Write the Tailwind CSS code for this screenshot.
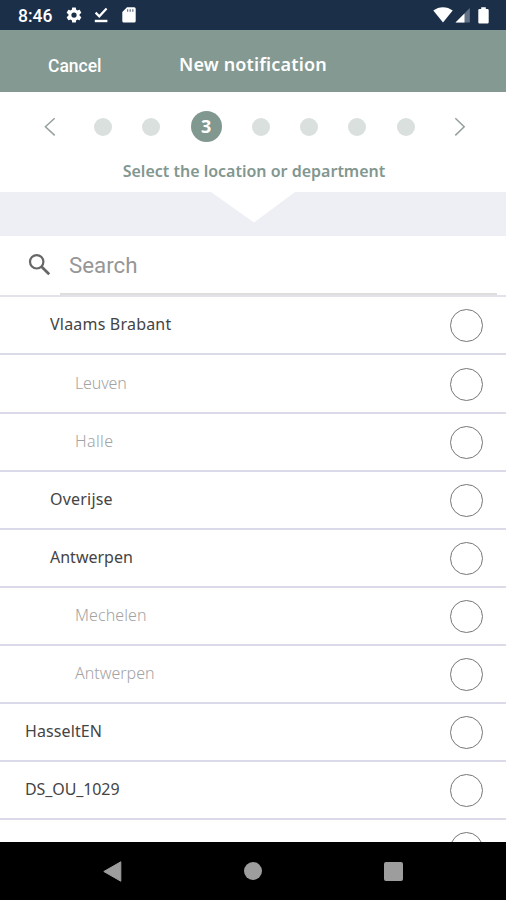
<!DOCTYPE html>
<html lang="en">
<head>
<meta charset="utf-8">
<title>New notification</title>
<script src="https://cdn.jsdelivr.net/npm/@tailwindcss/browser@4"></script>
</head>
<body class="w-[506px] h-[900px] overflow-hidden flex flex-col bg-white font-['Noto_Sans',sans-serif]">
  <!-- status bar -->
  <div class="h-[30px] shrink-0 bg-[#1b2f49] flex items-center pl-[18px] pr-[15px] text-white">
    <span class="w-[47px] font-['Roboto',sans-serif] font-medium text-[17.500px] leading-[30px] pt-[2px] whitespace-nowrap">8:46</span>
    <svg class="w-[18px] h-[18px]" viewBox="0 0 24 24" fill="currentColor"><path d="M19.43 12.98c.04-.32.07-.64.07-.98s-.03-.66-.07-.98l2.11-1.65c.19-.15.24-.42.12-.64l-2-3.46c-.12-.22-.39-.3-.61-.22l-2.49 1c-.52-.4-1.08-.73-1.69-.98l-.38-2.65A.49.49 0 0 0 14 2h-4c-.25 0-.46.18-.49.42l-.38 2.65c-.61.25-1.17.59-1.69.98l-2.49-1c-.23-.09-.49 0-.61.22l-2 3.46c-.13.22-.07.49.12.64l2.11 1.65c-.04.32-.07.65-.07.98s.03.66.07.98l-2.11 1.65c-.19.15-.24.42-.12.64l2 3.46c.12.22.39.3.61.22l2.49-1c.52.4 1.08.73 1.69.98l.38 2.65c.03.24.24.42.49.42h4c.25 0 .46-.18.49-.42l.38-2.65c.61-.25 1.17-.59 1.69-.98l2.49 1c.23.09.49 0 .61-.22l2-3.46c.12-.22.07-.49-.12-.64zM12 15.5a3.5 3.5 0 1 1 0-7 3.500 3.500 0 0 1 0 7z"/></svg>
    <svg class="w-[14px] h-[16px] ml-[11px]" viewBox="0 0 14 16" fill="none" stroke="currentColor"><path d="M1.600 5.600L5.300 9.300L12.600 1.500" stroke-width="2.200"/><path d="M.8 14H13.400" stroke-width="2.400"/></svg>
    <svg class="w-[14px] h-[16px] ml-[14px]" viewBox="0 0 14 16"><path d="M5 .3H12.200A1.500 1.500 0 0 1 13.700 1.800V14A1.500 1.500 0 0 1 12.200 15.500H1.800A1.500 1.500 0 0 1 .3 14V5Z" fill="#fff"/><path d="M5.600 2.300V4.700M8.200 2.300V4.700M10.800 2.300V4.700" stroke="#6c7a8b" stroke-width="1.300"/></svg>
    <div class="ml-auto flex items-center">
      <svg class="w-[20px] h-[16px] mr-[2px]" viewBox="0 0 20 16"><path d="M.3 3.500C6-1 14-1 19.700 3.500L10 15.500Z" fill="#fff"/></svg>
      <svg class="w-[15px] h-[16px]" viewBox="0 0 15 16"><path d="M.5 15.500L14.800 1V15.500Z" fill="#627286"/><path d="M.5 15.500L9.500 6.400V15.500Z" fill="#fff"/></svg>
      <svg class="w-[11px] h-[17px] ml-[8px] mr-[2px]" viewBox="0 0 11 17"><path d="M3.200 .3H7.800V2H9.500Q10.700 2 10.700 3.200V15.300Q10.700 16.500 9.500 16.500H1.500Q.3 16.500 .3 15.300V3.200Q.3 2 1.500 2H3.200Z" fill="#fff"/></svg>
    </div>
  </div>
  <!-- title bar -->
  <header class="h-[62px] shrink-0 bg-[#849991] flex items-center text-white pl-[48px]">
    <span class="w-[131px] font-['Roboto',sans-serif] font-medium text-[17.500px] pt-[9px] leading-[24px]">Cancel</span>
    <span class="font-semibold text-[18px] tracking-[0.150px] pt-[6px] leading-[24px] whitespace-nowrap">New notification</span>
  </header>
  <!-- steps -->
  <section class="h-[100px] shrink-0 flex flex-col items-center">
    <div class="mt-[18px] h-[33px] w-full flex items-center pl-[44px] pr-[40px]">
      <svg class="w-[12px] h-[20px] mr-[38px]" viewBox="0 0 12 20" fill="none" stroke="#94a19b" stroke-width="1.500"><path d="M10.700 1.200L1.400 9.700L10.700 18.400"/></svg>
      <div class="flex items-center gap-[30.300px]">
        <i class="size-[18px] rounded-full bg-[#d9e0dd]"></i>
        <i class="size-[18px] rounded-full bg-[#d9e0dd]"></i>
        <b class="size-[31px] rounded-full bg-[#809890] text-white text-[18px] leading-[30px] text-center">3</b>
        <i class="size-[18px] rounded-full bg-[#d9e0dd]"></i>
        <i class="size-[18px] rounded-full bg-[#d9e0dd]"></i>
        <i class="size-[18px] rounded-full bg-[#d9e0dd]"></i>
        <i class="size-[18px] rounded-full bg-[#d9e0dd]"></i>
      </div>
      <svg class="w-[12px] h-[20px] ml-auto" viewBox="0 0 12 20" fill="none" stroke="#94a19b" stroke-width="1.500"><path d="M1.300 1.200L10.200 9.700L1.300 18.400"/></svg>
    </div>
    <p class="mt-[16px] pl-[2px] text-[#82978f] font-semibold text-[16px] leading-[24px] whitespace-nowrap">Select the location or department</p>
  </section>
  <div class="h-[44px] shrink-0 bg-[#eeeff5] flex justify-center">
    <svg class="w-[84px] h-[31px]" viewBox="0 0 84 31"><path d="M0 0H84L43 30.500Z" fill="#fff"/></svg>
  </div>
  <!-- search -->
  <div class="h-[61.400px] shrink-0 flex border-b-2 border-[#e2e2ea] pl-[28px] pr-[9px]">
    <svg class="w-[24px] h-[24px] mt-[17px]" viewBox="0 0 24 24" fill="none" stroke="#666"><circle cx="8.700" cy="8.800" r="6.700" stroke-width="2.200"/><path d="M13.600 13.700L21.200 21.300" stroke-width="2.700"/></svg>
    <div class="ml-[8px] flex-1 border-b-2 border-[#dedede] pl-[9px] font-['Roboto',sans-serif] text-[22.300px] text-[#969696] leading-[59px]">Search</div>
  </div>
  <!-- locations -->
  <main class="flex-1 min-h-0 overflow-hidden text-[16px] text-[#444]">
    <div class="h-[58.100px] flex items-center justify-between border-b-2 border-[#dadae8] pl-[50px] pr-[23px]"><span class="pb-[3px] tracking-[0.200px]">Vlaams Brabant</span><i class="size-[33px] rounded-full border-[1.500px] border-[#777] mt-[1px]"></i></div>
    <div class="h-[58.100px] flex items-center justify-between border-b-2 border-[#dadae8] pl-[75px] pr-[23px]"><span class="pb-[2px] font-light text-[#a3a3a3] tracking-[-0.150px]">Leuven</span><i class="size-[33px] rounded-full border-[1.500px] border-[#777] mt-[1px]"></i></div>
    <div class="h-[58.100px] flex items-center justify-between border-b-2 border-[#dadae8] pl-[75px] pr-[23px]"><span class="pb-[2px] font-light text-[#a3a3a3] tracking-[0.400px]">Halle</span><i class="size-[33px] rounded-full border-[1.500px] border-[#777] mt-[1px]"></i></div>
    <div class="h-[58.100px] flex items-center justify-between border-b-2 border-[#dadae8] pl-[50px] pr-[23px]"><span class="pb-[2px] tracking-[0.200px]">Overijse</span><i class="size-[33px] rounded-full border-[1.500px] border-[#777] mt-[1px]"></i></div>
    <div class="h-[58.100px] flex items-center justify-between border-b-2 border-[#dadae8] pl-[50px] pr-[23px]"><span class="pb-[2px]">Antwerpen</span><i class="size-[33px] rounded-full border-[1.500px] border-[#777] mt-[1px]"></i></div>
    <div class="h-[58.100px] flex items-center justify-between border-b-2 border-[#dadae8] pl-[75px] pr-[23px]"><span class="pb-[2px] font-light text-[#a3a3a3] tracking-[0.100px]">Mechelen</span><i class="size-[33px] rounded-full border-[1.500px] border-[#777] mt-[1px]"></i></div>
    <div class="h-[58.100px] flex items-center justify-between border-b-2 border-[#dadae8] pl-[75px] pr-[23px]"><span class="pb-[2px] font-light text-[#a3a3a3]">Antwerpen</span><i class="size-[33px] rounded-full border-[1.500px] border-[#777] mt-[1px]"></i></div>
    <div class="h-[58.100px] flex items-center justify-between border-b-2 border-[#dadae8] pl-[25px] pr-[23px]"><span class="pb-[2px] tracking-[0.100px]">HasseltEN</span><i class="size-[33px] rounded-full border-[1.500px] border-[#777] mt-[1px]"></i></div>
    <div class="h-[58.100px] flex items-center justify-between border-b-2 border-[#dadae8] pl-[25px] pr-[23px]"><span class="pb-[2px] tracking-[-0.100px]">DS_OU_1029</span><i class="size-[33px] rounded-full border-[1.500px] border-[#777] mt-[1px]"></i></div>
    <div class="h-[58.100px] flex items-center justify-end pr-[23px]"><i class="size-[33px] rounded-full border-[1.500px] border-[#777] -mt-[1px]"></i></div>
  </main>
  <!-- system navigation -->
  <nav class="h-[58px] shrink-0 bg-black flex items-center justify-between pl-[103px] pr-[103px]">
    <svg class="w-[19px] h-[21px]" viewBox="0 0 19 21"><path d="M.8 10.500L17.800 .8V20.200Z" fill="#9d9d9d" stroke="#9d9d9d" stroke-linejoin="round"/></svg>
    <i class="size-[18px] rounded-full bg-[#9d9d9d]"></i>
    <i class="size-[19px] rounded-[2px] bg-[#9d9d9d]"></i>
  </nav>
</body>
</html>
